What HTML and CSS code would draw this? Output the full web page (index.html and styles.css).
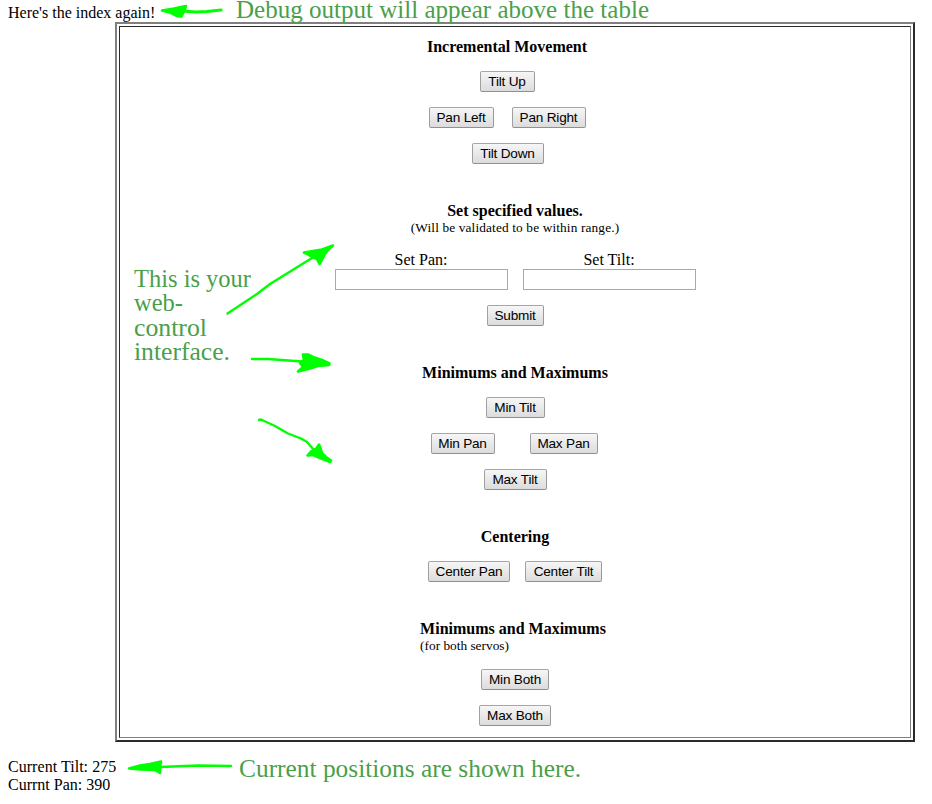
FILE: index.html
```html
<!DOCTYPE html>
<html lang="en">
<head>
<meta charset="utf-8">
<title>Pan and Tilt Control</title>
<link rel="stylesheet" href="styles.css">
</head>
<body>
<div class="debug">Here's the index again!</div>
<main class="panel">
<div class="panel-inner">
  <section class="group movement">
    <h2>Incremental Movement</h2>
    <div class="row"><button class="w55">Tilt Up</button></div>
    <div class="row wide"><button class="w65">Pan Left</button><button class="w74">Pan Right</button></div>
    <div class="row down"><button class="w72">Tilt Down</button></div>
  </section>
  <section class="group">
    <h2>Set specified values.</h2>
    <small class="hint">(Will be validated to be within range.)</small>
    <div class="row fields">
      <label>Set Pan:<input type="text"></label>
      <label>Set Tilt:<input type="text"></label>
    </div>
    <div class="row"><button class="w57">Submit</button></div>
  </section>
  <section class="group">
    <h2>Minimums and Maximums</h2>
    <div class="row"><button class="w59">Min Tilt</button></div>
    <div class="row wider"><button class="w64">Min Pan</button><button class="w68">Max Pan</button></div>
    <div class="row"><button class="w63">Max Tilt</button></div>
  </section>
  <section class="group">
    <h2>Centering</h2>
    <div class="row"><button class="w82">Center Pan</button><button class="w77">Center Tilt</button></div>
  </section>
  <section class="group">
    <div class="both-title">
      <h2>Minimums and Maximums</h2>
      <small>(for both servos)</small>
    </div>
    <div class="row"><button class="w68">Min Both</button></div>
    <div class="row"><button class="w72">Max Both</button></div>
  </section>
</div>
</main>
<footer class="status">
  <div class="tilt">Current Tilt: 275</div>
  <div>Currnt Pan: 390</div>
</footer>
<svg class="notes" width="932" height="804" viewBox="0 0 932 804">
  <g class="note-text">
    <text x="236" y="18" textLength="413" lengthAdjust="spacingAndGlyphs">Debug output will appear above the table</text>
    <text x="134" y="287" textLength="117" lengthAdjust="spacingAndGlyphs">This is your</text>
    <text x="134" y="311" textLength="49" lengthAdjust="spacingAndGlyphs">web-</text>
    <text x="134" y="335.500" textLength="73" lengthAdjust="spacingAndGlyphs">control</text>
    <text x="134" y="360" textLength="96" lengthAdjust="spacingAndGlyphs">interface.</text>
    <text x="239" y="776.500" textLength="342" lengthAdjust="spacingAndGlyphs">Current positions are shown here.</text>
  </g>
  <g class="shaft">
    <path class="thick" d="M182 11 L196 12 L207 11.500 L221 10"/>
    <path d="M227.500 313.500 L257 294 L270 284 L312 258"/>
    <path d="M252 359 L268 359 L302 361.500"/>
    <path d="M259 420 L261 419.500 L275 426 L288 433.500 L301 438.500 L307 442 L314 450"/>
    <path d="M160 767 L198 765.500 L231 766"/>
  </g>
  <g class="head">
    <path d="M162 10.500 L174 8.500 L186 6 L184 11 L181.500 16.500 L177 16 L170 12.500 Z"/>
    <path d="M304 252.500 L322 249.500 L333 245.500 L328 250 L325 254 L319.500 264 L317 259 L311 256 Z"/>
    <path d="M303 354.500 L308 354.500 L313 357 L322 360 L329.500 363.500 L329 365 L318 366 L308 369 L298 371.500 L303 367 L300 363 L304 360 Z"/>
    <path d="M319 444.500 L320.500 448 L322 453 L326 457 L331 460.500 L330 462 L320 458 L313 455 L307.500 455.500 L311 451.500 L316 449 Z"/>
    <path d="M129 768.500 L140 765.500 L150 764 L161 761.500 L160 767 L160 773 L155 770 L141 769.500 Z"/>
  </g>
</svg>
</body>
</html>
```

FILE: styles.css
```css
body {
  margin: 0;
  padding-top: 4px;
  background: #fff;
  color: #000;
  font: 16px/18px "Liberation Serif", serif;
  position: relative;
}
.debug { height: 18px; padding-left: 8px; }
.panel {
  box-sizing: border-box;
  width: 800px;
  height: 720px;
  margin-left: 115px;
  padding: 2px;
  border: 2px solid;
  border-color: #808080 #2b2b2b #2b2b2b #808080;
}
.panel-inner {
  box-sizing: border-box;
  height: 712px;
  padding-top: 11px;
  border: 1px solid;
  border-color: #2b2b2b #808080 #808080 #2b2b2b;
}
.group {
  display: flex;
  flex-direction: column;
  align-items: center;
  margin-bottom: 38px;
}
.movement { margin-right: 16px; }
h2 { margin: 0; font-size: 16px; line-height: 18px; }
small { display: block; font-size: 13.333px; line-height: 16px; }
.hint { letter-spacing: 0.13px; }
.row { display: flex; gap: 15px; margin-top: 15px; }
.wide { gap: 18px; }
.wider { gap: 35px; margin-right: 2px; }
.down { margin-left: 1px; }
.both-title { margin-right: 4px; }
label { display: flex; flex-direction: column; align-items: center; }
input {
  box-sizing: border-box;
  width: 173px;
  height: 21px;
  margin: 0;
  padding: 1px;
  border: 1px solid #a9a9a9;
  background: #fff;
}
button {
  box-sizing: border-box;
  height: 21px;
  margin: 0;
  padding: 1px 0 0;
  border: 1px solid #999;
  border-color: #a6a6a6 #999 #909090 #a0a0a0;
  border-radius: 2px;
  background: linear-gradient(#f6f6f6, #dcdcdc);
  color: #000;
  font: 13.6px/18px "Liberation Sans", sans-serif;
  letter-spacing: -0.2px;
  white-space: nowrap;
}
.w55 { width: 55px; }
.w57 { width: 57px; }
.w59 { width: 59px; }
.w63 { width: 63px; }
.w64 { width: 64px; }
.w65 { width: 65px; }
.w68 { width: 68px; }
.w72 { width: 72px; }
.w74 { width: 74px; }
.w77 { width: 77px; }
.w82 { width: 82px; }
.status { padding: 16px 8px 0; }
.tilt { letter-spacing: 0.04px; }
.notes {
  position: absolute;
  top: 0;
  left: 0;
  overflow: visible;
  pointer-events: none;
}
.note-text { fill: #4a9f4a; font: 24.5px "Liberation Serif", serif; }
.shaft { fill: none; stroke: #0f0; stroke-width: 2.4; stroke-linecap: round; stroke-linejoin: round; }
.thick { stroke-width: 3.2; }
.head { fill: #0f0; stroke: #0f0; stroke-width: 2.6; stroke-linejoin: round; }
```
